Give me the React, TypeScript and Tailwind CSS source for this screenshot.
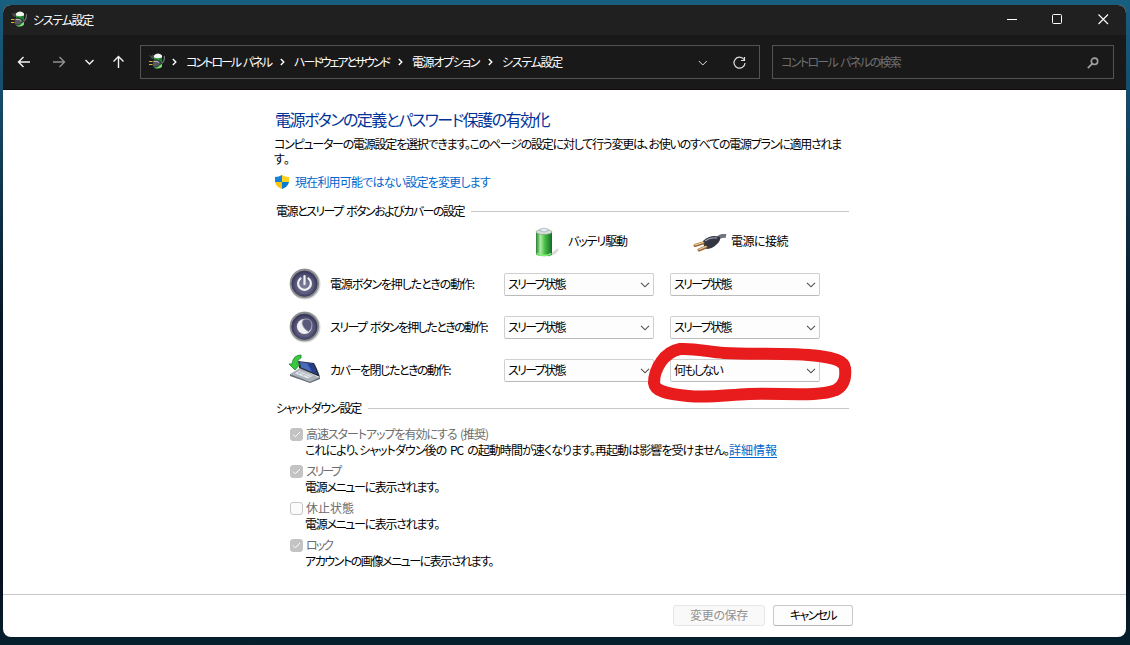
import { useLayoutEffect, useRef, useState } from "react";

interface LabelProps {
  text: string;
  width: number;
  className?: string;
}

// UI text with proportional kana, tracked so that it fills the given width
function Label({ text, width, className = "" }: LabelProps) {
  const ref = useRef<HTMLSpanElement>(null);
  const [spacing, setSpacing] = useState(0);

  useLayoutEffect(() => {
    const el = ref.current;
    if (!el) return;
    el.style.letterSpacing = "0px";
    const natural = el.getBoundingClientRect().width;
    const next = (width - natural) / text.length;
    el.style.letterSpacing = `${next}px`;
    setSpacing(next);
  }, [text, width]);

  return (
    <span
      ref={ref}
      className={`inline-block shrink-0 -translate-y-px whitespace-nowrap [font-feature-settings:'palt'] [word-spacing:2px] ${className}`}
      style={{ letterSpacing: `${spacing}px` }}
    >
      {text}
    </span>
  );
}

function PowerPlanIcon() {
  return (
    <svg width="17" height="16" viewBox="0 0 17 16" className="shrink-0 -translate-y-px">
      <path d="M0 2 3 3 4 1 6 5 3 6Z" fill="#4a4d52" />
      <path d="M5 3q0-2 4-2t4 2v11q-3 2-8 1z" fill="#2e9c3a" />
      <path d="M10 4h3v9l-3 2z" fill="#187d2c" />
      <path d="M5 2.500q4-4 8 0v2q-4 1.500-8 0z" fill="#f2f5f1" />
      <path d="M5 13q5 0 8 -2v2.500q-2 3-7 1.500z" fill="#75df70" />
      <path d="M12 11q4.500-3.500 3.200-8" stroke="#6c7074" strokeWidth="1.200" fill="none" />
      <path d="M3.500 7h5l4 3-4 4h-5z" fill="#55585d" stroke="#16191b" strokeWidth=".7" />
      <path d="M5 8.500h3l2 1" stroke="#b5b8ba" fill="none" />
      <path d="M0 8.500h3.500M0 11.500h3.500" stroke="#e0b52d" strokeWidth="1.200" />
    </svg>
  );
}

function Crumb({ text, width }: { text: string; width: number }) {
  return (
    <>
      <svg width="5" height="8" viewBox="0 0 5 8" className="mr-[9px] shrink-0">
        <path d="M.8 1 3.8 4 .8 7" fill="none" stroke="#fff" strokeWidth="1.4" />
      </svg>
      <Label text={text} width={width} className="mr-[9px]" />
    </>
  );
}

function TitleBar() {
  return (
    <div className="flex h-[30px] shrink-0 items-center bg-[#202020] pl-2 text-white">
      <PowerPlanIcon />
      <Label text="システム設定" width={60} className="ml-[5px]" />
      <svg width="104" height="12" viewBox="0 0 104 12" className="ml-auto mr-4 -mt-[2px]" fill="none" stroke="#fff">
        <path d="M1 6.5h10" />
        <rect x="46.5" y="1.5" width="9" height="9" rx="1" />
        <path d="m92.5 1.5 9.5 9.5m0-9.5-9.5 9.5" strokeWidth="1.1" />
      </svg>
    </div>
  );
}

function NavBar() {
  return (
    <div className="flex h-[55px] shrink-0 items-start border-b border-[#120a10] bg-[#191919] pt-[10px] text-white">
      <svg width="137" height="34" viewBox="0 0 137 34" className="shrink-0" fill="none" stroke="#f3f3f3" strokeWidth="1.4">
        <path d="M27 17H15.5m5-5-5 5 5 5" />
        <path d="M50 17h11.5m-5-5 5 5-5 5" stroke="#909090" />
        <path d="m82.5 15 4 4 4-4" />
        <path d="M115.500 23V11.500m-5 5 5-5 5 5" />
      </svg>
      <div className="flex h-[34px] w-[620px] shrink-0 items-center border border-[#535353] pl-2">
        <PowerPlanIcon />
        <div className="ml-[6px] flex items-center">
          <Crumb text="コントロール パネル" width={85} />
          <Crumb text="ハードウェアとサウンド" width={95} />
          <Crumb text="電源オプション" width={67} />
          <Crumb text="システム設定" width={60} />
        </div>
        <svg width="48" height="14" viewBox="0 0 48 14" className="ml-auto mr-[13px] mt-[2px]" fill="none" stroke="#ddd">
          <path d="m.8 5 4 4 4-4" />
          <path d="M46 3.500A5.500 5.500 0 1 0 47 7M46.500 1v3.500h-3.500" strokeWidth="1.2" />
        </svg>
      </div>
      <div className="ml-3 flex h-[34px] w-[342px] shrink-0 items-center border border-[#535353] pl-2 pr-[14px] text-[#707070]">
        <Label text="コントロール パネルの検索" width={119} />
        <svg width="12" height="12" viewBox="0 0 12 12" className="ml-auto mt-px" fill="none" stroke="#a0a0a0">
          <circle cx="7.500" cy="4.300" r="3.200" strokeWidth="1.600" />
          <path d="M5.300 6.700.8 11.200" strokeWidth="1.700" />
        </svg>
      </div>
    </div>
  );
}

function ShieldIcon() {
  return (
    <svg width="14" height="14" viewBox="0 0 14 14" className="shrink-0">
      <path d="M7 0Q4 2 0 2v5h7z" fill="#1683d8" />
      <path d="M7 0q3 2 7 2v5H7z" fill="#ffd21f" />
      <path d="M0 7h7v7Q1 12 0 7" fill="#ffc40c" />
      <path d="M14 7H7v7q6-2 7-7" fill="#087bcf" />
    </svg>
  );
}

function BatteryIcon() {
  return (
    <svg width="26" height="32" viewBox="0 0 26 32" className="shrink-0">
      <defs>
        <linearGradient id="cell">
          <stop offset="0" stopColor="#26812c" />
          <stop offset=".28" stopColor="#a9eca1" />
          <stop offset=".55" stopColor="#48bd4a" />
          <stop offset="1" stopColor="#126b22" />
        </linearGradient>
      </defs>
      <path d="M15 28 24 21q1 5-5 7l-5 2z" fill="#aaa" opacity=".45" />
      <path d="M2 5v22c0 3 16 3 16 0V5z" fill="url(#cell)" />
      <ellipse cx="10" cy="5" rx="8" ry="2.500" fill="#d8e2d8" stroke="#76977a" strokeWidth=".6" />
      <path d="M6 4V2q4-2 8 0v2q-4 2-8 0" fill="#e5e8f0" stroke="#8b95a2" strokeWidth=".5" />
      <path d="M3 26c1 3 13 3 14 0" stroke="#7bf06f" strokeWidth="1.500" fill="none" />
    </svg>
  );
}

function PlugIcon() {
  return (
    <svg width="34" height="18" viewBox="0 0 34 18" className="shrink-0">
      <path d="M33 2q-7-1-10 5" stroke="#6f737d" strokeWidth="4" fill="none" />
      <path d="M10 7q5-5 12-5l5 1q1 4-4 8-4 4-10 4l-2-3z" fill="#343742" />
      <path d="M12 7q5-4 12-3" stroke="#8e94a5" strokeWidth="1.300" fill="none" />
      <path d="m10 9-8 2.500M13 13l-7 3" stroke="#986737" strokeWidth="3" strokeLinecap="round" />
      <path d="m10 8.500-8 2.500M13 12.500l-7 3" stroke="#f5d6a3" strokeWidth="1.200" strokeLinecap="round" />
    </svg>
  );
}

function RoundButtonIcon({ sleep = false }: { sleep?: boolean }) {
  const fill = sleep ? "sleep-face" : "power-face";
  return (
    <svg width="32" height="32" viewBox="0 0 32 32" className="shrink-0 -translate-y-px">
      <defs>
        <radialGradient id={fill} cy=".55">
          <stop offset="0" stopColor="#85859f" />
          <stop offset=".65" stopColor="#5e5d7e" />
          <stop offset="1" stopColor="#3d3c60" />
        </radialGradient>
      </defs>
      <circle cx="16" cy="16" r="15.500" fill="#d6d6d6" />
      <circle cx="15.500" cy="15.500" r="14.700" fill="#8b8e8f" />
      <circle cx="15.500" cy="15.700" r="12.600" fill={`url(#${fill})`} stroke="#373659" strokeWidth=".8" />
      {sleep ? (
        <>
          <circle cx="15.500" cy="15.500" r="7.600" fill="#f1f1f4" />
          <path d="M15 8.200q7-1.500 8 5 .2 5-3.500 7.500-5.500-3-6.500-8-.2-3 2-4.500" fill="#5b5a7b" stroke="#aaaabd" strokeWidth=".8" />
        </>
      ) : (
        <path d="M11.500 10.500a6.400 6.400 0 1 0 8 0M15.500 8v8" fill="none" stroke="#f2f2f6" strokeWidth="2.200" strokeLinecap="round" />
      )}
    </svg>
  );
}

function LidIcon() {
  return (
    <svg width="32" height="30" viewBox="0 0 32 30" className="shrink-0 -translate-y-[2px]">
      <path d="m1 20 10-6 20 10-10 5z" fill="#aeb3ba" />
      <path d="m1 20 20 8 10-5v2l-10 4L1 22z" fill="#666d78" />
      <path d="m5 19.500 6-3.500 14 5.500-6 3.500z" fill="#e4e8ec" stroke="#9ca3ad" strokeWidth=".6" />
      <path d="m9 18 12 5M11 17l12 5M9 20l4-2.500M13 22l4-2.500" stroke="#a4aab3" strokeWidth=".6" />
      <path d="m9 7 16 2q3 5 6 14L10 14z" fill="#252b3d" />
      <path d="m11 8 13 2 4 10-16-6.500z" fill="#496cba" />
      <path d="m18 9 6 1 4 10-5-2z" fill="#263e8d" />
      <path d="M12 1Q4 1 3 10H0l6 6 5-6H8q0-5 4-6z" fill="#3bc83c" stroke="#138725" strokeWidth=".8" />
    </svg>
  );
}

function Select({ text, width }: { text: string; width: number }) {
  return (
    <div className="flex h-[23px] w-[150px] shrink-0 items-center justify-between rounded-[2px] border border-[#cfcfcf] border-b-[#bababa] bg-[#fdfdfd] pl-[3px] pr-[3px]">
      <Label text={text} width={width} />
      <svg width="10" height="6" viewBox="0 0 10 6" fill="none" stroke="#505050" strokeWidth="1.100">
        <path d="m1 .8 4 4 4-4" />
      </svg>
    </div>
  );
}

function GroupTitle({ text, width }: { text: string; width: number }) {
  return (
    <div className="flex h-4 items-center gap-[7px] pl-[2px]">
      <Label text={text} width={width} />
      <div className="h-px flex-1 bg-[#c8c8c8]" />
    </div>
  );
}

interface ActionRowProps {
  icon: React.ReactNode;
  label: string;
  width: number;
  plugged?: string;
  pluggedWidth?: number;
}

function ActionRow({ icon, label, width, plugged = "スリープ状態", pluggedWidth = 57 }: ActionRowProps) {
  return (
    <div className="flex h-[43px] items-center pl-[15px]">
      {icon}
      <div className="ml-[9px] w-[174px]">
        <Label text={label} width={width} />
      </div>
      <Select text="スリープ状態" width={57} />
      <div className="w-4" />
      <Select text={plugged} width={pluggedWidth} />
    </div>
  );
}

interface OptionProps {
  label: string;
  width: number;
  checked?: boolean;
  description: string;
  descriptionWidth: number;
  link?: boolean;
}

function Option({ label, width, checked = true, description, descriptionWidth, link }: OptionProps) {
  return (
    <div className="h-[37px] pl-4">
      <div className="flex h-[18px] items-center">
        <div
          className={`flex size-[13px] items-center justify-center rounded-[3px] border ${
            checked ? "border-[#c3c3c3] bg-[#c3c3c3]" : "border-[#c5c5c5] bg-[#fbfbfb]"
          }`}
        >
          {checked && (
            <svg width="9" height="7" viewBox="0 0 9 7">
              <path d="m1 3.500 2.300 2.300L8 1" fill="none" stroke="#fff" />
            </svg>
          )}
        </div>
        <Label text={label} width={width} className="ml-[3px] text-[#6d6d6d]" />
      </div>
      <div className="flex h-[15px] items-center pl-[15px]">
        <Label text={description} width={descriptionWidth} />
        {link && <Label text="詳細情報" width={48} className="text-[#0066cc] underline underline-offset-2" />}
      </div>
    </div>
  );
}

export default function App() {
  return (
    <div className="relative h-[645px] w-[1130px] overflow-hidden bg-[linear-gradient(180deg,#175f80_0%,#164b68_15%,#071525_50%,#06101f_90%,#06202d_100%)] pl-[3px] pt-[5px] font-['Noto_Sans_CJK_JP','Noto_Sans',sans-serif] text-[12px] leading-[15px] text-black">
      <div className="flex h-[632px] w-[1123px] flex-col overflow-hidden rounded-lg bg-white">
        <TitleBar />
        <NavBar />
        <main className="ml-[271px] h-[504px] w-[575px] shrink-0 pt-5">
          <h1 className="flex h-5 items-center text-[16px] leading-5 text-[#003399]">
            <Label text="電源ボタンの定義とパスワード保護の有効化" width={274} className="ml-px" />
          </h1>
          <p className="mt-[7px] h-[31px]">
            <Label text="コンピューターの電源設定を選択できます。このページの設定に対して行う変更は、お使いのすべての電源プランに適用されま" width={567} />
            <Label text="す。" width={16} />
          </p>
          <div className="mt-[6px] flex h-4 items-center gap-[6px] pl-px text-[#0066cc]">
            <ShieldIcon />
            <Label text="現在利用可能ではない設定を変更します" width={195} />
          </div>
          <div className="mt-[13px]">
            <GroupTitle text="電源とスリープ ボタンおよびカバーの設定" width={188} />
          </div>
          <div className="mt-[6px] flex h-9 items-center pl-[260px]">
            <BatteryIcon />
            <Label text="バッテリ駆動" width={59} className="-mt-[3px] ml-2" />
            <div className="ml-[66px] flex items-center gap-1">
              <PlugIcon />
              <Label text="電源に接続" width={57} className="-mt-[3px]" />
            </div>
          </div>
          <div className="mt-[2px]">
            <ActionRow icon={<RoundButtonIcon />} label="電源ボタンを押したときの動作:" width={144} />
            <ActionRow icon={<RoundButtonIcon sleep />} label="スリープ ボタンを押したときの動作:" width={157} />
            <ActionRow icon={<LidIcon />} label="カバーを閉じたときの動作:" width={120} plugged="何もしない" pluggedWidth={48} />
          </div>
          <div className="mt-[8px]">
            <GroupTitle text="シャットダウン設定" width={85} />
          </div>
          <div className="mt-[9px]">
            <Option
              label="高速スタートアップを有効にする (推奨)"
              width={182}
              description="これにより、シャットダウン後の PC の起動時間が速くなります。再起動は影響を受けません。"
              descriptionWidth={424}
              link
            />
            <Option label="スリープ" width={34} description="電源メニューに表示されます。" descriptionWidth={134} />
            <Option label="休止状態" width={48} checked={false} description="電源メニューに表示されます。" descriptionWidth={134} />
            <Option label="ロック" width={26} description="アカウントの画像メニューに表示されます。" descriptionWidth={188} />
          </div>
        </main>
        <footer className="flex flex-1 items-start gap-2 border-t border-[#c8c8c8] pl-[670px] pt-[10px]">
          <button className="flex h-[21px] w-[92px] items-center justify-center rounded-[3px] border border-[#e6e6e6] bg-[#f9f9f9] text-[#929292]">
            <Label text="変更の保存" width={58} />
          </button>
          <button className="flex h-[21px] w-[80px] items-center justify-center rounded-[3px] border border-[#c9c9c9] border-b-[#b5b5b5] bg-[#fdfdfd]">
            <Label text="キャンセル" width={46} />
          </button>
        </footer>
      </div>

      {/* Hand-drawn marker around the lid setting */}
      <svg width="210" height="66" viewBox="646 340 210 66" className="pointer-events-none absolute left-[646px] top-[340px]">
        <path
          d="M680 349C664 352 654 369 654 383C655 392 668 394 688 396C710 398 726 395 749 394C786 393 819 397 836 390C845 385 846 377 845 368C844 361 834 358 819 356C786 352 753 355 724 353C708 352 695 348 680 349Z"
          fill="none"
          stroke="#e81c1c"
          strokeWidth="12"
          strokeLinejoin="round"
        />
      </svg>
    </div>
  );
}
